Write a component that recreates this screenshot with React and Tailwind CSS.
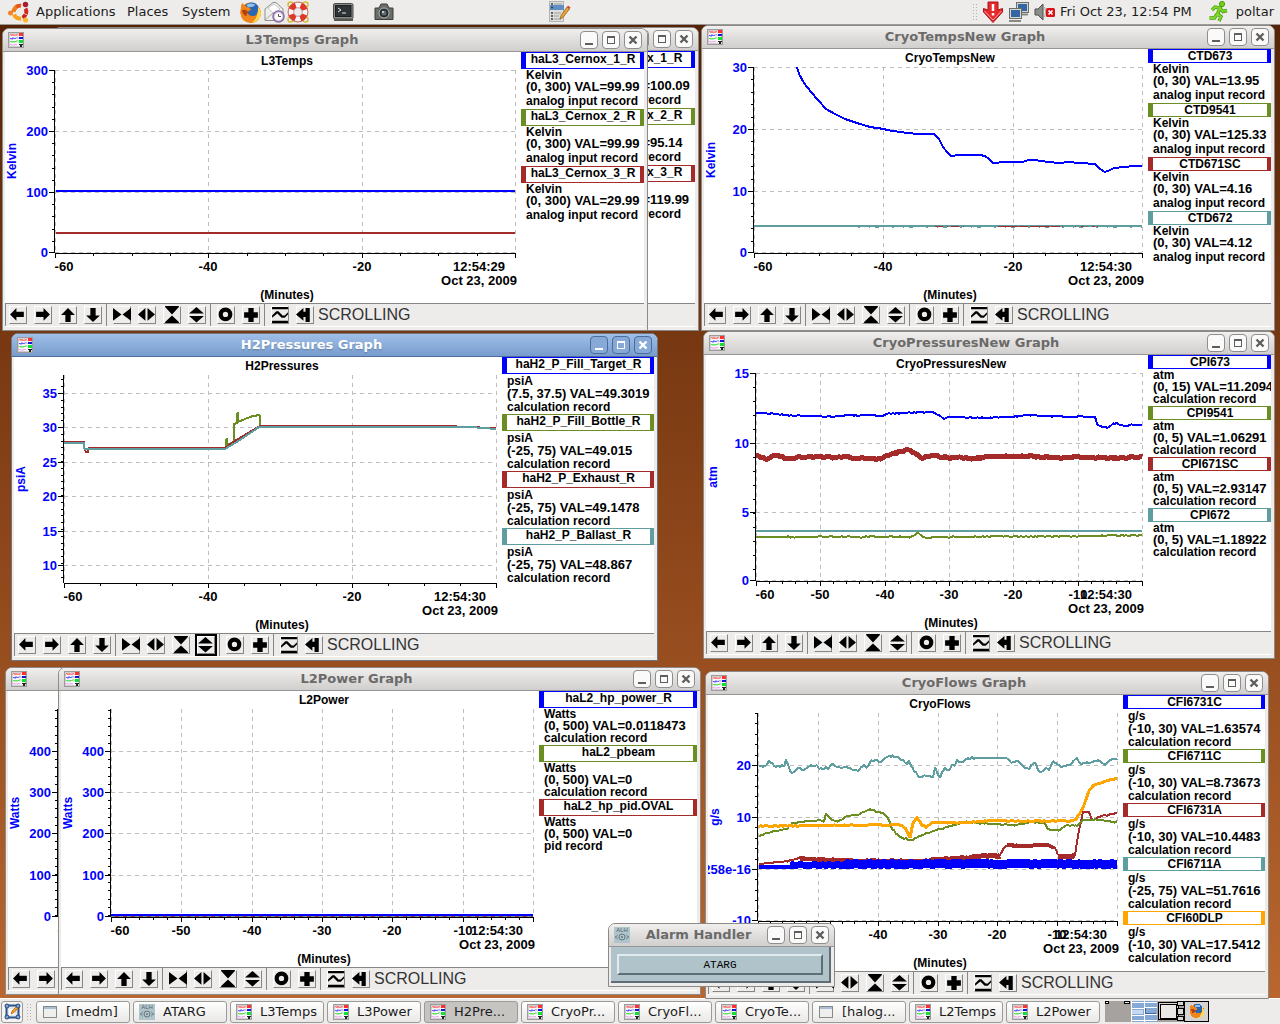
import { useState } from "react";

const BLUE = "#0000ff";
const GREEN = "#6b8e23";
const BROWN = "#a52a2a";
const TEAL = "#5f9ea0";
const ORANGE = "#ffa500";

// border colour of the legend headers
const tone = {
    [BLUE]: "border-[#0000ff]",
    [GREEN]: "border-[#6b8e23]",
    [BROWN]: "border-[#a52a2a]",
    [TEAL]: "border-[#5f9ea0]",
    [ORANGE]: "border-[#ffa500]",
};

// adds repeatable noise to a polyline
function jitter(points, amp, step = 1) {
    if (!amp) return points;
    let seed = 11;
    const out = [];
    for (let i = 0; i < points.length - 1; i++) {
        const [x1, y1] = points[i];
        const [x2, y2] = points[i + 1];
        for (let x = x1; x < x2; x += step) {
            seed = (seed * 1103515245 + 12345) % 2147483648;
            const y = y1 + ((y2 - y1) * (x - x1)) / (x2 - x1);
            out.push([x, y + (seed / 2147483648 - 0.5) * 2 * amp]);
        }
    }
    out.push(points[points.length - 1]);
    return out;
}

/* ---------- icons ---------- */

function GraphIcon() {
    return (
        <svg width="16" height="16" viewBox="0 0 16 16" className="shrink-0">
            <rect x="0.5" y="0.5" width="15" height="15" fill="#f6f6f6" stroke="#9c9c9c" />
            <rect x="1.5" y="1.5" width="13" height="13" fill="none" stroke="#cfcfcf" />
            <path d="M2 3.5L3 2L4 4L5 2L6 4L7 2.5L8 4L9 2L10 3.5" stroke="#ff7070" fill="none" />
            <path d="M2 7L3 6L4 7.5L5 5.5L6 7L7 6L8 6.5L9 5.5L10 6.5" stroke="#5858ff" fill="none" />
            <path d="M2 10L3 9L4 10.5L5 9L6 10.5L7 9L8 10L9 8.5L10 9.5" stroke="#50e050" fill="none" />
            <path d="M2 13L3 12L4 13.5L5 12.5L6 13.5L7 12L8 13L9 12.5" stroke="#f4a0f4" fill="none" />
            <rect x="11" y="1" width="4" height="3" fill="#ff3030" />
            <rect x="11" y="5" width="4" height="2" fill="#1515d8" />
            <rect x="11" y="8" width="4" height="3" fill="#10e030" />
            <rect x="11" y="12" width="4" height="1" fill="#222" />
            <rect x="12" y="13" width="2" height="2" fill="#222" />
        </svg>
    );
}

function AlarmIcon() {
    return (
        <svg width="16" height="16" viewBox="0 0 16 16" className="shrink-0">
            <rect width="16" height="16" fill="#b0c4cb" />
            <text x="8" y="5" textAnchor="middle" fontSize="6" fontFamily="Liberation Sans, sans-serif" fill="#56656c">ALH</text>
            <circle cx="8" cy="10" r="3" fill="none" stroke="#67777e" />
            <circle cx="8" cy="10" r="1" fill="#67777e" />
            <path d="M3.5 7.5Q1.5 10 3.5 12.5M12.5 7.5Q14.5 10 12.5 12.5M1.5 9V11M14.5 9V11" stroke="#7c8c93" fill="none" />
        </svg>
    );
}

function WindowIcon() {
    return (
        <svg width="16" height="16" viewBox="0 0 16 16" className="shrink-0">
            <rect x="1.5" y="2.5" width="13" height="11" fill="#eeeeec" stroke="#888a85" />
            <path d="M2 4H14" stroke="#a9bdd6" strokeWidth="2" />
        </svg>
    );
}

function FirefoxIcon({ size }) {
    return (
        <svg width={size} height={size} viewBox="0 0 24 24" className="shrink-0">
            <circle cx="12" cy="12" r="10.5" fill="#e66a12" />
            <circle cx="13" cy="9.5" r="8" fill="#2a66b4" />
            <path d="M8 4Q12 1 17 4Q15 7 12 6Q9 8 8 4Z" fill="#8fc4ee" />
            <path d="M2 7Q2 3 4 2Q5 5 8 6Q12 7 13 9Q9 10 9 13Q12 17 17 15Q21 12 20 6Q24 11 22.500 15Q20 23 12 23Q2 22 1.500 12Z" fill="#f08519" />
            <path d="M20 6Q24 11 22.500 15Q20 22 13 22.500Q20 19 20 6Z" fill="#ffd84a" />
            <path d="M3 10Q5 8 8 10L10 12Q7 13 8 16Q4 15 3 10Z" fill="#b93c0a" />
        </svg>
    );
}

function UbuntuIcon() {
    return (
        <svg width="22" height="22" viewBox="0 0 22 22">
            <g fill="none" strokeWidth="4">
                <path d="M7.500 6.500A6.500 6.500 0 0 1 13 4.800" stroke="#e8541a" />
                <path d="M5.500 11A6.500 6.500 0 0 1 8.500 6" stroke="#ef7d1a" />
                <path d="M17.500 7.500A6.500 6.500 0 0 1 18 13" stroke="#d22a1c" />
                <path d="M6 13.500A6.500 6.500 0 0 0 13 17.500" stroke="#f9a11b" />
                <path d="M17.500 13.500A6.500 6.500 0 0 1 14.500 16.800" stroke="#c8241c" />
            </g>
            <circle cx="2.500" cy="12" r="2.500" fill="#f58220" />
            <circle cx="17.500" cy="3.500" r="2.700" fill="#a81c2c" />
            <circle cx="17.500" cy="19" r="2.600" fill="#fdb52b" />
        </svg>
    );
}

function MailIcon() {
    return (
        <svg width="21" height="22" viewBox="0 0 21 22">
            <path d="M1 8L9 1.500H12L19 8V19.500H1Z" fill="#eeeeec" stroke="#8f918d" />
            <path d="M4 7L10 3L16 8L10 13Z" fill="#fff" stroke="#c9cac6" />
            <path d="M1 19L9 12L12 12" fill="none" stroke="#a8aaa5" />
            <circle cx="14.500" cy="15.500" r="5.500" fill="#d9cfe4" stroke="#8a6fa5" strokeWidth="1.500" />
            <circle cx="14.500" cy="15.500" r="3.500" fill="#fff" />
            <path d="M14.500 13V15.500H17" fill="none" stroke="#555" />
        </svg>
    );
}

function HelpIcon() {
    return (
        <svg width="22" height="22" viewBox="0 0 22 22">
            <g fill="none" stroke="#d8bb3c" strokeWidth="1.500">
                <circle cx="3.500" cy="3.500" r="2.500" />
                <circle cx="18.500" cy="3.500" r="2.500" />
                <circle cx="3.500" cy="18.500" r="2.500" />
                <circle cx="18.500" cy="18.500" r="2.500" />
            </g>
            <circle cx="11" cy="11" r="7" fill="none" stroke="#e2352c" strokeWidth="5.500" />
            <circle cx="11" cy="11" r="7" fill="none" stroke="#f7f5f3" strokeWidth="5.500" strokeDasharray="5 6" strokeDashoffset="2.500" />
            <circle cx="11" cy="11" r="10" fill="none" stroke="#b8403a" strokeWidth="0.700" />
            <circle cx="11" cy="11" r="4.200" fill="none" stroke="#a99" strokeWidth="0.700" />
        </svg>
    );
}

function TerminalIcon() {
    return (
        <svg width="21" height="19" viewBox="0 0 21 19">
            <rect x="0.500" y="0.500" width="19.500" height="15.500" rx="1.500" fill="#888a85" stroke="#4a4c49" />
            <rect x="2.500" y="2.500" width="15.500" height="11" fill="#2e3436" stroke="#1c2022" />
            <path d="M5 5L8 7L5 9M9 10H13" stroke="#e6e8e4" fill="none" />
            <rect x="1" y="16" width="19" height="2" fill="#555753" />
        </svg>
    );
}

function CameraIcon() {
    return (
        <svg width="20" height="18" viewBox="0 0 20 18">
            <path d="M1 5H5L7 1H13L15 5H19V16.500H1Z" fill="#6b6d69" stroke="#3b3d3a" />
            <circle cx="10" cy="10" r="5" fill="#2a2c2b" stroke="#b6b8b3" />
            <circle cx="10" cy="10" r="2.500" fill="#5b6f78" />
            <circle cx="9" cy="9" r="1" fill="#dfe8ec" />
        </svg>
    );
}

function NotesIcon() {
    return (
        <svg width="22" height="22" viewBox="0 0 22 22">
            <rect x="0.500" y="0.500" width="14" height="20" fill="#dedfdc" stroke="#b3b4b0" />
            <rect x="1" y="4" width="14" height="5" fill="#5f8fc4" />
            <path d="M5 3H13M5 12H12M5 15H10M5 18H12" stroke="#9a9c97" />
            <path d="M2 3H4M2 6.500H4M2 12H4M2 15H4M2 18H4" stroke="#3b3d3a" strokeWidth="1.500" />
            <path d="M11 18L12 14.500L18 6L20.500 8L14 16.500Z" fill="#e3a03c" stroke="#8c5c14" strokeWidth="0.700" />
            <path d="M18 6L19 4.500L21.500 6.500L20.500 8Z" fill="#d8432f" />
        </svg>
    );
}

function UpdateIcon() {
    return (
        <svg width="22" height="22" viewBox="0 0 22 22">
            <path d="M6 1H16V9L20.500 7.500V11L11 21.500L1.500 11V7.500L6 9Z" fill="#e4282c" stroke="#b11217" />
            <path d="M2.500 10L11 19L19.500 10" fill="none" stroke="#f7a3a5" />
            <path d="M11 3V10M11 12V14.500" stroke="#fff" strokeWidth="2.500" />
        </svg>
    );
}

function NetworkIcon() {
    return (
        <svg width="22" height="22" viewBox="0 0 22 22">
            <rect x="8.500" y="1.500" width="12" height="10" fill="#d3d7cf" stroke="#6c6e69" />
            <rect x="10" y="3" width="9" height="7" fill="#3465a4" />
            <path d="M13 13.500H20" stroke="#888a85" strokeWidth="2" />
            <rect x="1.500" y="7.500" width="12" height="10" fill="#d3d7cf" stroke="#6c6e69" />
            <rect x="3" y="9" width="9" height="7" fill="#3465a4" />
            <path d="M1 20H13" stroke="#888a85" strokeWidth="2" />
        </svg>
    );
}

function MutedIcon() {
    return (
        <svg width="22" height="20" viewBox="0 0 22 20">
            <path d="M1 7H4L9 2V18L4 13H1Z" fill="#8b8d88" stroke="#4e504d" />
            <path d="M10.500 5Q13 10 10.500 15" fill="none" stroke="#a0a29d" />
            <rect x="12" y="6" width="9" height="9" rx="1.500" fill="#d8141a" />
            <path d="M14.500 8.500L18.500 12.500M18.500 8.500L14.500 12.500" stroke="#fff" strokeWidth="1.700" />
        </svg>
    );
}

function RunnerIcon() {
    return (
        <svg width="20" height="22" viewBox="0 0 20 22" fill="none">
            <circle cx="14" cy="3" r="2.600" fill="#73d216" stroke="#4a9a06" />
            <path d="M4 9L7 6L12 7L9.500 13L13 15.500L11 20M9 13L6.500 17H1.500M12 7.500L15 10.500L19 9.500" stroke="#4a9a06" strokeWidth="3.400" />
            <path d="M4 9L7 6L12 7L9.500 13L13 15.500L11 20M9 13L6.500 17H1.500M12 7.500L15 10.500L19 9.500" stroke="#7fdb2a" strokeWidth="1.800" />
        </svg>
    );
}

/* ---------- graph toolbar ---------- */

const toolGroups = [
    [
        { name: "Pan left", d: "M1 8L7 2V5.500H14V10.500H7V14Z" },
        { name: "Pan right", d: "M15 8L9 2V5.500H2V10.500H9V14Z" },
        { name: "Pan up", d: "M8.500 2L15 8.500H11V15H6V8.500H2Z" },
        { name: "Pan down", d: "M8.500 15L15 9H11V2H6V9H2Z" },
    ],
    [
        { name: "Zoom in x", d: "M0 2L8 8L0 14ZM17 2L9 8L17 14Z" },
        { name: "Zoom out x", d: "M0 8L7 2V14ZM9 2L16 8L9 14Z" },
        { name: "Zoom in y", d: "M2 0H15V1L8.500 8L2 1ZM2 16V15L8.500 9L15 15V16Z" },
        { name: "Zoom out y", d: "M1 7L8 1L15 7ZM1 9.500H15L8 15.500Z" },
    ],
    [
        { name: "Reset", d: "M8 1.500A6.500 6.500 0 1 0 8 14.500A6.500 6.500 0 1 0 8 1.500ZM8 5.500A2.500 2.500 0 1 1 8 10.500A2.500 2.500 0 1 1 8 5.500Z" },
        { name: "Home", d: "M6 2H11V6H15V11H11V15H6V11H2V6H6Z" },
    ],
    [
        { name: "Auto scale", d: "M1 1H16V3H1ZM1 14H16V16H1ZM1 9L5 5H7L11 9H13L16 6V8L13 11H10L6 7L1 11Z" },
        { name: "Scroll", d: "M0 8L7 2V5.500H9V2H13V15H9V10.500H7V14Z" },
    ],
];

function Toolbar({ focused }) {
    return (
        <div className="flex h-6 items-stretch overflow-hidden border-t border-b border-t-[#868684] border-b-white bg-[#edeceb]">
            {toolGroups.map((group, i) => (
                <div
                    key={i}
                    className={`flex shrink-0 items-center gap-[7px] border-l border-[#868684] pr-1 ${i === 0 ? "pl-[3px]" : "pl-[6px]"}`}
                >
                    {group.map((tool) => (
                        <button
                            key={tool.name}
                            aria-label={tool.name}
                            className={`h-[18px] w-[18px] shrink-0 border border-t-white border-l-white border-r-[#868684] border-b-[#868684] ${focused === tool.name ? "outline-2 outline-black" : ""}`}
                        >
                            <svg width="18" height="18" viewBox="0 0 17 17" className="-m-px max-w-none">
                                <path d={tool.d} fill="#000" fillRule="evenodd" />
                            </svg>
                        </button>
                    ))}
                </div>
            ))}
            <span className="font-['Liberation_Sans',sans-serif] text-[16px] leading-[21px] text-[#333]">SCROLLING</span>
        </div>
    );
}

/* ---------- plot ---------- */

function Plot({ graph }) {
    const { origin, size, plot, yTicks, xStep, xSub } = graph;
    const [l, t, r, b] = plot;
    const mid = Math.round((l + r) / 2) + 2;

    const count = 60 / xStep;
    const xs = [];
    for (let i = 0; i <= count; i++) {
        xs.push({ x: Math.round(l + ((r - l) * i) / count), label: `-${60 - i * xStep}` });
    }
    const xMinor = [];
    for (let i = 1; i < count * xSub; i++) {
        xMinor.push(Math.round(l + ((r - l) * i) / (count * xSub)));
    }

    const gap = (yTicks[1][1] - yTicks[0][1]) / 5;
    const yMinor = [];
    for (let y = yTicks[0][1]; y >= t; y -= gap) yMinor.push(Math.round(y));
    for (let y = yTicks[0][1]; y <= b; y += gap) yMinor.push(Math.round(y));

    return (
        <svg
            width={size[0]}
            height={size[1]}
            viewBox={`${origin[0]} ${origin[1]} ${size[0]} ${size[1]}`}
            className="shrink-0 overflow-hidden font-['Liberation_Sans',sans-serif] text-[13px] font-bold"
        >
            <g stroke="#bebebe" strokeDasharray="4 4" shapeRendering="crispEdges">
                {xs.map(({ x }) => (
                    <path key={x} d={`M${x + 0.5} ${t}V${b}`} />
                ))}
                {yTicks.map(([label, y]) => (
                    <path key={label} d={`M${l} ${y + 0.5}H${r}`} />
                ))}
            </g>
            <g stroke="#000" shapeRendering="crispEdges">
                <path d={`M${l - 0.5} ${t}V${b + 1}M${l} ${b + 1.5}H${r + 1}`} />
                {xs.map(({ x }) => (
                    <path key={x} d={`M${x + 0.5} ${b + 1}v5`} />
                ))}
                {xMinor.map((x, i) => (
                    <path key={i} d={`M${x + 0.5} ${b + 1}v3`} />
                ))}
                {yTicks.map(([label, y]) => (
                    <path key={label} d={`M${l} ${y + 0.5}h-6`} />
                ))}
                {yMinor.map((y, i) => (
                    <path key={i} d={`M${l} ${y + 0.5}h-3`} />
                ))}
            </g>
            {graph.series.map((s, i) => (
                <polyline
                    key={i}
                    points={jitter(s.points, s.noise, s.step).map((p) => p.join(",")).join(" ")}
                    fill="none"
                    stroke={s.color}
                    strokeWidth={s.width || 2}
                    strokeDasharray={s.dash}
                    strokeLinejoin="bevel"
                    shapeRendering="crispEdges"
                />
            ))}
            <g fill="#0000ff">
                {yTicks.map(([label, y]) => (
                    <text key={label} x={l - 7} y={y + 5} textAnchor="end">{label}</text>
                ))}
                <text
                    transform={`translate(${origin[0] + 11} ${Math.round((t + b) / 2)}) rotate(-90)`}
                    textAnchor="middle"
                    className="text-[12px]"
                >
                    {graph.units}
                </text>
            </g>
            <g textAnchor="middle">
                <text x={mid} y={t - 5} className="text-[12px]">{graph.name}</text>
                {xs.slice(0, -1).map(({ x, label }, i) => (
                    <text key={label} x={i === 0 ? x + 9 : x} y={b + 19}>{label}</text>
                ))}
                <text x={r - 36} y={b + 19}>{graph.time}</text>
                <text x={r - 36} y={b + 33}>Oct 23, 2009</text>
                <text x={mid} y={b + 47} className="text-[12px]">(Minutes)</text>
            </g>
        </svg>
    );
}

function Legend({ graph }) {
    const rows = graph.rows;
    return (
        <ul className="min-w-0 flex-1 overflow-hidden font-['Liberation_Sans',sans-serif] text-[12px] font-bold whitespace-nowrap text-black">
            {graph.legend.map(([name, range, record, color]) => (
                <li key={name}>
                    <div className={`border-y border-r-4 border-l-[5px] text-center leading-[12px] ${rows.head} ${tone[color]}`}>{name}</div>
                    <div className={`pl-[5px] ${rows.units}`}>{graph.units}</div>
                    <div className="pl-[5px] text-[13px] leading-[12px]">{range}</div>
                    <div className={`pl-[5px] ${rows.record}`}>{record}</div>
                </li>
            ))}
        </ul>
    );
}

/* ---------- windows ---------- */

function ControlButton({ label, active, children }) {
    return (
        <button
            aria-label={label}
            className={`flex h-[18px] w-[18px] shrink-0 items-center justify-center rounded-[4px] border ${active ? "border-[#4a6d9c] bg-[#86a9d8]" : "border-[#8f8e8c] bg-[#fafafa]"}`}
        >
            <svg width="16" height="16" viewBox="0 0 16 16" fill="none" stroke={active ? "#fff" : "#5f5e5c"} shapeRendering={label === "Close" ? "auto" : "crispEdges"}>
                {children}
            </svg>
        </button>
    );
}

function Frame({ title, place, icon, active, children }) {
    return (
        <section
            className={`absolute flex flex-col rounded-t-[7px] border bg-[#edeceb] ${active ? "border-[#6f7680]" : "border-[#8b8a88]"} ${place}`}
        >
            <header
                className={`flex h-[23px] shrink-0 items-center rounded-t-[6px] border-b pr-[5px] pl-[5px] font-['DejaVu_Sans',sans-serif] ${active ? "border-[#4a6d9c] bg-linear-to-b from-[#a0bfe8] to-[#779ccd]" : "border-[#979694] bg-linear-to-b from-[#f0efee] to-[#d0cfcd]"}`}
            >
                {icon || <GraphIcon />}
                <h2
                    className={`min-w-0 flex-1 truncate text-center text-[13px] leading-[20px] font-bold ${active ? "text-white text-shadow-sm" : "text-[#6b6a69]"}`}
                >
                    {title}
                </h2>
                <div className="flex gap-1">
                    <ControlButton label="Minimize" active={active}>
                        <path d="M4 12H12" strokeWidth="2" />
                    </ControlButton>
                    <ControlButton label="Maximize" active={active}>
                        <path d="M4.500 4.500H11.500V11.500H4.500ZM4 5.500H12" />
                    </ControlButton>
                    <ControlButton label="Close" active={active}>
                        <path d="M4.500 4.500L11.500 11.500M11.500 4.500L4.500 11.500" strokeWidth="2.400" />
                    </ControlButton>
                </div>
            </header>
            <div className="pr-[3px] pb-[3px] pl-[2px]">{children}</div>
        </section>
    );
}

function GraphWindow({ graph, active, focused }) {
    return (
        <Frame title={`${graph.name} Graph`} place={graph.place} active={active}>
            <div className="flex overflow-hidden bg-white">
                <Plot graph={graph} />
                <Legend graph={graph} />
            </div>
            <Toolbar focused={focused} />
        </Frame>
    );
}

/* Plot boxes, ticks and traces share the desktop's pixel grid; origin is
   where the plot's white canvas begins on it. */

const analog = "analog input record";
const calc = "calculation record";

const l3Rows = { head: "h-[17px]", units: "leading-[12px]", record: "leading-[16px]" };
const l2Rows = { head: "h-[17px]", units: "leading-[12px]", record: "leading-[13px]" };

const l3Power = {
    name: "L3Power",
    place: "left-[53px] top-[2px] w-[646px]",
    units: "Kelvin",
    time: "12:54:29",
    origin: [56, 51],
    size: [508, 252],
    plot: [106, 69, 558, 252],
    xStep: 20,
    xSub: 4,
    yTicks: [["300", 69], ["200", 130], ["100", 191], ["0", 252]],
    series: [],
    rows: l3Rows,
    legend: [
        ["haL3_Cernox_1_R", "(0, 300) VAL=100.09", analog, BLUE],
        ["haL3_Cernox_2_R", "(0, 300) VAL=95.14", analog, GREEN],
        ["haL3_Cernox_3_R", "(0, 300) VAL=119.99", analog, BROWN],
    ],
};

const l3Temps = {
    name: "L3Temps",
    place: "left-[2px] top-[3px] w-[646px]",
    units: "Kelvin",
    time: "12:54:29",
    origin: [5, 52],
    size: [516, 251],
    plot: [55, 70, 515, 252],
    xStep: 20,
    xSub: 4,
    yTicks: [["300", 70], ["200", 131], ["100", 192], ["0", 252]],
    series: [
        { color: BLUE, points: [[56, 191], [515, 191]] },
        { color: BROWN, points: [[56, 233], [515, 233]] },
    ],
    rows: l3Rows,
    legend: [
        ["haL3_Cernox_1_R", "(0, 300) VAL=99.99", analog, BLUE],
        ["haL3_Cernox_2_R", "(0, 300) VAL=99.99", analog, GREEN],
        ["haL3_Cernox_3_R", "(0, 300) VAL=29.99", analog, BROWN],
    ],
};

const cryoTemps = {
    name: "CryoTempsNew",
    place: "left-[701px] top-0 w-[574px]",
    units: "Kelvin",
    time: "12:54:30",
    origin: [704, 49],
    size: [444, 254],
    plot: [754, 67, 1142, 252],
    xStep: 20,
    xSub: 4,
    yTicks: [["30", 67], ["20", 129], ["10", 191], ["0", 252]],
    series: [
        {
            color: BLUE,
            points: [
                [797, 67], [799, 74], [804, 83], [811, 92], [818, 100], [826, 109], [835, 114], [845, 119],
                [857, 123], [870, 127], [884, 129], [887, 130], [900, 132], [917, 134], [934, 134], [939, 139],
                [943, 147], [947, 152], [951, 156], [959, 155], [980, 155], [985, 156], [989, 159], [993, 163],
                [1005, 162], [1023, 162], [1028, 160], [1035, 160], [1048, 162], [1060, 163], [1068, 162],
                [1080, 163], [1095, 164], [1100, 169], [1105, 172], [1110, 170], [1114, 168], [1125, 167],
                [1133, 166], [1142, 166],
            ],
        },
        { color: TEAL, points: [[754, 226], [1142, 226]] },
        { color: TEAL, width: 3, dash: "2 9 1 5 4 13", points: [[858, 226], [1142, 226]] },
        { color: BROWN, width: 1, dash: "8 4 1 3", points: [[935, 226], [965, 226]] },
        { color: BROWN, width: 1, dash: "20 1 9 2", points: [[998, 226], [1063, 226]] },
        { color: BROWN, width: 1, dash: "1 5 3 2", points: [[1075, 226], [1100, 226]] },
    ],
    rows: { head: "h-[14px]", units: "leading-[12px]", record: "leading-[16px]" },
    legend: [
        ["CTD673", "(0, 30) VAL=13.95", analog, BLUE],
        ["CTD9541", "(0, 30) VAL=125.33", analog, GREEN],
        ["CTD671SC", "(0, 30) VAL=4.16", analog, BROWN],
        ["CTD672", "(0, 30) VAL=4.12", analog, TEAL],
    ],
};

const h2Pressures = {
    name: "H2Pressures",
    place: "left-[11px] top-[308px] w-[647px]",
    units: "psiA",
    time: "12:54:30",
    origin: [14, 357],
    size: [488, 276],
    plot: [64, 375, 496, 582],
    xStep: 20,
    xSub: 4,
    yTicks: [["35", 393], ["30", 427], ["25", 462], ["20", 496], ["15", 531], ["10", 565]],
    series: [
        {
            color: GREEN,
            points: [
                [226, 448], [226, 439], [227, 439], [227, 445], [234, 442], [234, 424], [237, 423], [237, 413],
                [238, 413], [238, 422], [245, 419], [253, 416], [260, 415], [260, 425],
            ],
        },
        {
            color: BROWN,
            points: [
                [64, 442], [84, 442], [84, 447], [86, 452], [88, 452], [88, 448], [225, 448], [233, 442],
                [260, 426], [450, 426], [463, 427], [496, 428],
            ],
        },
        {
            color: TEAL,
            points: [[64, 443], [84, 443], [84, 449], [225, 449], [240, 440], [259, 427], [470, 427], [496, 429]],
        },
    ],
    rows: { head: "h-[17px]", units: "leading-[14px]", record: "leading-[14px]" },
    legend: [
        ["haH2_P_Fill_Target_R", "(7.5, 37.5) VAL=49.3019", calc, BLUE],
        ["haH2_P_Fill_Bottle_R", "(-25, 75) VAL=49.015", calc, GREEN],
        ["haH2_P_Exhaust_R", "(-25, 75) VAL=49.1478", calc, BROWN],
        ["haH2_P_Ballast_R", "(-25, 75) VAL=48.867", calc, TEAL],
    ],
};

const cryoPressures = {
    name: "CryoPressuresNew",
    place: "left-[703px] top-[306px] w-[572px]",
    units: "atm",
    time: "12:54:30",
    origin: [706, 355],
    size: [442, 276],
    plot: [756, 373, 1142, 580],
    xStep: 10,
    xSub: 5,
    yTicks: [["15", 373], ["10", 443], ["5", 512], ["0", 580]],
    series: [
        {
            color: BLUE,
            noise: 0.7,
            step: 2,
            points: [
                [756, 413], [766, 413], [785, 415], [811, 416], [830, 417], [855, 415], [881, 416], [889, 414],
                [901, 413], [914, 412], [933, 412], [938, 415], [944, 418], [952, 417], [988, 418], [1011, 417],
                [1025, 415], [1044, 416], [1095, 417], [1097, 424], [1102, 427], [1107, 428], [1113, 424],
                [1117, 423], [1124, 426], [1129, 425], [1142, 425],
            ],
        },
        {
            color: BROWN,
            width: 5,
            noise: 1,
            step: 2,
            points: [
                [756, 455], [766, 459], [776, 455], [788, 459], [797, 457], [826, 457], [833, 458], [848, 457],
                [866, 459], [881, 459], [892, 454], [909, 449], [916, 454], [922, 458], [933, 455], [948, 458],
                [960, 457], [972, 459], [988, 457], [1022, 456], [1044, 457], [1055, 458], [1070, 457],
                [1107, 458], [1142, 457],
            ],
        },
        {
            color: GREEN,
            noise: 0.7,
            step: 2,
            points: [[756, 537], [910, 537], [914, 535], [918, 532], [921, 535], [925, 538], [935, 537], [1090, 536], [1142, 535]],
        },
        { color: TEAL, points: [[756, 531], [1142, 531]] },
    ],
    rows: { head: "h-[14px]", units: "leading-[12px]", record: "leading-[13px]" },
    legend: [
        ["CPI673", "(0, 15) VAL=11.2094", calc, BLUE],
        ["CPI9541", "(0, 5) VAL=1.06291", calc, GREEN],
        ["CPI671SC", "(0, 5) VAL=2.93147", calc, BROWN],
        ["CPI672", "(0, 5) VAL=1.18922", calc, TEAL],
    ],
};

const l2Power = {
    name: "L2Power",
    place: "left-[58px] top-[642px] w-[643px]",
    units: "Watts",
    time: "12:54:30",
    origin: [61, 691],
    size: [478, 276],
    plot: [111, 709, 533, 916],
    xStep: 10,
    xSub: 5,
    yTicks: [["400", 751], ["300", 792], ["200", 833], ["100", 875], ["0", 916]],
    series: [
        { color: BROWN, points: [[111, 916], [533, 916]] },
        { color: TEAL, width: 1, dash: "4 4", points: [[111, 916], [533, 916]] },
        { color: BLUE, points: [[111, 915], [533, 915]] },
    ],
    rows: l2Rows,
    legend: [
        ["haL2_hp_power_R", "(0, 500) VAL=0.0118473", calc, BLUE],
        ["haL2_pbeam", "(0, 500) VAL=0", calc, GREEN],
        ["haL2_hp_pid.OVAL", "(0, 500) VAL=0", "pid record", BROWN],
    ],
};

const l2Temps = {
    ...l2Power,
    name: "L2Temps",
    place: "left-[5px] top-[642px] w-[643px]",
    origin: [8, 691],
    plot: [58, 709, 480, 916],
    series: [],
    legend: [],
};

const cryoFlows = {
    name: "CryoFlows",
    place: "left-[705px] top-[646px] w-[564px]",
    units: "g/s",
    time: "12:54:30",
    origin: [708, 695],
    size: [415, 276],
    plot: [758, 713, 1117, 920],
    xStep: 10,
    xSub: 5,
    yTicks: [["20", 765], ["10", 817], ["258e-16", 869], ["-10", 920]],
    series: [
        {
            color: BROWN,
            noise: 0.8,
            step: 2,
            points: [
                [759, 864], [789, 861], [800, 857], [826, 859], [863, 860], [922, 860], [937, 858], [966, 857],
                [977, 855], [1000, 855], [1004, 848], [1009, 844], [1018, 845], [1048, 845], [1055, 848],
                [1058, 855], [1075, 855], [1078, 836], [1083, 812], [1089, 812], [1092, 820], [1103, 816],
                [1117, 813],
            ],
        },
        { color: BROWN, width: 4, points: [[800, 859], [850, 861], [930, 861]] },
        { color: BROWN, width: 5, noise: 0.8, step: 2, points: [[930, 860], [966, 858], [977, 856], [1000, 856]] },
        { color: BROWN, width: 4, points: [[1007, 845], [1018, 846], [1048, 845], [1054, 848]] },
        { color: BROWN, width: 5, noise: 0.8, step: 2, points: [[1058, 857], [1075, 856]] },
        { color: BLUE, width: 4, noise: 0.5, step: 3, points: [[759, 867], [795, 867]] },
        { color: BLUE, width: 7, noise: 0.5, step: 3, points: [[790, 865], [860, 865]] },
        { color: BLUE, width: 9, noise: 0.5, step: 3, points: [[845, 864], [1117, 864]] },
        {
            color: TEAL,
            noise: 1.2,
            step: 2,
            points: [
                [759, 766], [766, 766], [769, 760], [774, 766], [784, 766], [786, 759], [788, 766], [792, 773],
                [798, 768], [803, 770], [811, 766], [817, 766], [819, 770], [826, 767], [828, 771], [832, 763],
                [837, 768], [848, 768], [859, 770], [864, 766], [867, 769], [871, 761], [877, 760], [881, 763],
                [887, 757], [894, 756], [901, 759], [907, 763], [909, 760], [914, 771], [920, 777], [927, 775],
                [933, 777], [935, 768], [940, 777], [945, 768], [949, 771], [952, 765], [955, 766], [957, 759],
                [961, 763], [966, 759], [975, 758],
            ],
        },
        { color: TEAL, points: [[975, 758], [1007, 758]] },
        {
            color: TEAL,
            noise: 1.2,
            step: 2,
            points: [
                [1007, 758], [1012, 763], [1018, 760], [1022, 766], [1029, 769], [1034, 762], [1040, 772],
                [1046, 768], [1049, 770], [1053, 761], [1059, 766], [1066, 767], [1073, 762], [1077, 759],
                [1081, 764], [1092, 763], [1099, 760], [1105, 764], [1112, 760], [1117, 760],
            ],
        },
        {
            color: GREEN,
            noise: 0.8,
            step: 2,
            points: [
                [759, 836], [770, 832], [787, 829], [792, 823], [807, 821], [824, 821], [826, 814], [830, 819],
                [838, 822], [848, 816], [859, 814], [870, 810], [883, 813], [889, 820], [892, 829], [900, 837],
                [911, 840], [922, 835], [936, 830], [951, 826], [966, 822], [988, 824], [1014, 825], [1033, 822],
                [1044, 823], [1049, 830], [1059, 830], [1066, 825], [1077, 826], [1083, 820], [1101, 820],
                [1114, 822], [1117, 821],
            ],
        },
        {
            color: ORANGE,
            width: 3,
            noise: 0.5,
            step: 2,
            points: [
                [759, 826], [900, 825], [905, 828], [910, 837], [913, 823], [917, 817], [922, 825], [926, 827],
                [933, 822], [959, 823], [988, 821], [1070, 821], [1076, 819], [1083, 808], [1089, 791],
                [1094, 785], [1107, 781], [1117, 778],
            ],
        },
    ],
    rows: { head: "h-[14px]", units: "leading-[14px]", record: "leading-[14px]" },
    legend: [
        ["CFI6731C", "(-10, 30) VAL=1.63574", calc, BLUE],
        ["CFI6711C", "(-10, 30) VAL=8.73673", calc, GREEN],
        ["CFI6731A", "(-10, 30) VAL=10.4483", calc, BROWN],
        ["CFI6711A", "(-25, 75) VAL=51.7616", calc, TEAL],
        ["CFI60DLP", "(-10, 30) VAL=17.5412", calc, ORANGE],
    ],
};

/* ---------- panels ---------- */

function TopPanel() {
    return (
        <header className="flex h-[25px] shrink-0 items-center border-b border-[#9b9a97] bg-[#edeceb] pr-[6px] pl-2 text-[13px] whitespace-nowrap text-[#1c1c1c]">
            <UbuntuIcon />
            <nav className="flex">
                <button className="w-[91px] pl-[6px] text-left">Applications</button>
                <button className="w-[55px] pl-[6px] text-left">Places</button>
                <button className="w-[63px] pl-[6px] text-left">System</button>
            </nav>
            <div className="flex items-center gap-[2px]">
                <FirefoxIcon size={23} />
                <MailIcon />
                <HelpIcon />
            </div>
            <div className="ml-6 flex items-center gap-5">
                <TerminalIcon />
                <CameraIcon />
            </div>
            <div className="ml-[155px]">
                <NotesIcon />
            </div>
            <div className="ml-auto flex items-center gap-1">
                <Grip />
                <UpdateIcon />
                <NetworkIcon />
                <MutedIcon />
                <span>Fri Oct 23, 12:54 PM</span>
            </div>
            <div className="ml-4 flex items-center gap-2">
                <RunnerIcon />
                <span>poltar</span>
            </div>
        </header>
    );
}

function Grip() {
    return (
        <svg width="6" height="18" viewBox="0 0 6 18" className="shrink-0">
            <path d="M1.500 1V18M4.500 1V18" stroke="#b5b4b1" strokeDasharray="1 2" />
        </svg>
    );
}

const tasks = [
    { label: "[medm]", icon: <WindowIcon /> },
    { label: "ATARG", icon: <AlarmIcon /> },
    { label: "L3Temps" },
    { label: "L3Power" },
    { label: "H2Pre..." },
    { label: "CryoPr..." },
    { label: "CryoFl..." },
    { label: "CryoTe..." },
    { label: "[halog...", icon: <WindowIcon /> },
    { label: "L2Temps" },
    { label: "L2Power" },
];

function Pager() {
    return (
        <svg width="104" height="21" viewBox="0 0 104 21" className="ml-[5px] shrink-0" shapeRendering="crispEdges">
            <rect width="104" height="21" fill="#a5a29f" />
            <rect x="26" width="26" height="21" fill="#86a9d6" />
            <g fill="#edeceb" stroke="#000">
                <rect x="0.500" y="0.500" width="3" height="2" />
                <rect x="19.500" y="0.500" width="5" height="2" />
            </g>
            <g stroke="#fff">
                <path d="M26 1.500H52M26 7.500H39M26 14.500H39M39.500 0V21M40 6.500H52M40 13.500H52M26 19.500H52M26.500 0V21" />
                <path d="M27 11H38" stroke="#c5d9f2" strokeWidth="4" />
                <path d="M40.500 7V12.500H51" fill="none" stroke="#3f68a0" />
            </g>
            <g fill="#d6d4d1" stroke="#000">
                <rect x="53.500" y="1.500" width="20" height="17" />
                <rect x="55.500" y="3.500" width="16" height="14" fill="#e9e8e6" />
                <rect x="72.500" y="0.500" width="6" height="4" />
                <rect x="72.500" y="7.500" width="6" height="6" />
                <rect x="72.500" y="15.500" width="6" height="4" />
                <rect x="79.500" y="0.500" width="24" height="20" />
            </g>
            <svg x="84" y="2" width="16" height="16">
                <FirefoxIcon size={16} />
            </svg>
        </svg>
    );
}

function Taskbar() {
    const [current, setCurrent] = useState("H2Pre...");

    return (
        <footer className="flex h-[26px] shrink-0 items-center border-t border-white bg-[#edeceb] pl-px text-[13px] whitespace-nowrap text-[#1c1c1c]">
            <button aria-label="Show desktop" className="flex h-[22px] w-[22px] shrink-0 items-center justify-center rounded-[3px] border border-[#9b9a97] bg-[#f5f4f3]">
                <svg width="17" height="17" viewBox="0 0 17 17">
                    <rect x="2.500" y="2.500" width="12" height="12" fill="#dfe6ee" stroke="#2c5288" strokeWidth="2" />
                    <g fill="#7ea3d4" stroke="#234a80">
                        <circle cx="3" cy="3" r="2" />
                        <circle cx="14" cy="3" r="2" />
                        <circle cx="3" cy="14" r="2" />
                        <circle cx="14" cy="14" r="2" />
                    </g>
                    <rect x="5" y="6" width="6" height="6" fill="#fff" />
                    <path d="M7 11L8 8L12 4L14 5.500L9.500 10Z" fill="#f0a020" stroke="#a04c10" strokeWidth="0.600" />
                </svg>
            </button>
            <div className="mr-1 ml-[3px]">
                <Grip />
            </div>
            <div className="flex gap-[3px]">
                {tasks.map((task) => (
                    <button
                        key={task.label}
                        onClick={() => setCurrent(task.label)}
                        className={`flex h-[22px] w-[94px] shrink-0 items-center gap-2 rounded-[3px] border border-[#9b9a97] pl-[5px] ${current === task.label ? "bg-[#c6c4c1]" : "bg-linear-to-b from-white to-[#e9e8e6]"}`}
                    >
                        {task.icon || <GraphIcon />}
                        <span>{task.label}</span>
                    </button>
                ))}
            </div>
            <Pager />
        </footer>
    );
}

function App() {
    return (
        <div className="flex h-screen flex-col overflow-hidden font-['DejaVu_Sans',sans-serif]">
            <TopPanel />

            <main className="relative flex-1 bg-linear-to-b from-[#562405] via-[#8a4419] to-[#b9672f]">
                <GraphWindow graph={l3Power} />
                <GraphWindow graph={l3Temps} />
                <GraphWindow graph={cryoTemps} />
                <GraphWindow graph={h2Pressures} active focused="Zoom out y" />
                <GraphWindow graph={cryoPressures} />
                <GraphWindow graph={l2Temps} />
                <GraphWindow graph={l2Power} />
                <GraphWindow graph={cryoFlows} />

                <Frame title="Alarm Handler" icon={<AlarmIcon />} place="left-[608px] top-[898px] w-[227px]">
                    <div className="border-r-2 border-b-2 border-[#5f6d74] bg-[#b0c3ca] px-[6px] pt-[7px] pb-[6px]">
                        <button className="block h-[21px] w-full border-2 border-t-[#e1eaed] border-l-[#e1eaed] border-r-[#5f6d74] border-b-[#5f6d74] font-['Liberation_Mono',monospace] text-[11px] leading-[16px] text-black">
                            ATARG
                        </button>
                    </div>
                </Frame>
            </main>

            <Taskbar />
        </div>
    );
}

export default App;
